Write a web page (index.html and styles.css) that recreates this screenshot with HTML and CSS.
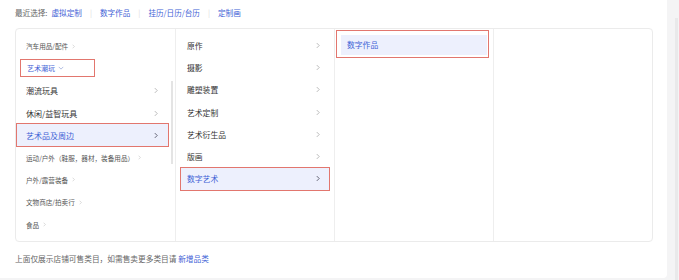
FILE: index.html
```html
<!DOCTYPE html>
<html lang="zh-CN">
<head>
  <meta charset="UTF-8">
  <title>选择类目</title>
  <link rel="stylesheet" href="styles.css">
</head>
<body>
  <div class="page">
    <div class="recent">
      <span class="label">最近选择:</span>
      <a href="#">虚拟定制</a><span class="sep">|</span>
      <a href="#">数字作品</a><span class="sep">|</span>
      <a href="#">挂历/日历/台历</a><span class="sep">|</span>
      <a href="#">定制画</a>
    </div>

    <div class="cascader">
      <div class="col col-first">
        <div class="row small">汽车用品/配件
          <svg class="arrow" viewBox="0 0 5 8"><polyline points="1,1 4,4 1,7"/></svg>
        </div>
        <div class="row group-row">
          <span class="group">艺术潮玩
            <svg class="down" viewBox="0 0 8 5"><polyline points="1,1 4,4 7,1"/></svg>
          </span>
        </div>
        <div class="row big">潮流玩具
          <svg class="arrow" viewBox="0 0 5 8"><polyline points="1,1 4,4 1,7"/></svg>
        </div>
        <div class="row big">休闲/益智玩具
          <svg class="arrow" viewBox="0 0 5 8"><polyline points="1,1 4,4 1,7"/></svg>
        </div>
        <div class="row big active">艺术品及周边
          <svg class="arrow" viewBox="0 0 5 8"><polyline points="1,1 4,4 1,7"/></svg>
        </div>
        <div class="row small">运动/户外（鞋服，器材，装备用品）
          <svg class="arrow" viewBox="0 0 5 8"><polyline points="1,1 4,4 1,7"/></svg>
        </div>
        <div class="row small">户外/露营装备
          <svg class="arrow" viewBox="0 0 5 8"><polyline points="1,1 4,4 1,7"/></svg>
        </div>
        <div class="row small">文物商店/拍卖行
          <svg class="arrow" viewBox="0 0 5 8"><polyline points="1,1 4,4 1,7"/></svg>
        </div>
        <div class="row small">食品
          <svg class="arrow" viewBox="0 0 5 8"><polyline points="1,1 4,4 1,7"/></svg>
        </div>
        <div class="track"></div>
      </div>

      <div class="col col-second">
        <div class="row">原作<svg class="arrow" viewBox="0 0 5 8"><polyline points="1,1 4,4 1,7"/></svg></div>
        <div class="row">摄影<svg class="arrow" viewBox="0 0 5 8"><polyline points="1,1 4,4 1,7"/></svg></div>
        <div class="row">雕塑装置<svg class="arrow" viewBox="0 0 5 8"><polyline points="1,1 4,4 1,7"/></svg></div>
        <div class="row">艺术定制<svg class="arrow" viewBox="0 0 5 8"><polyline points="1,1 4,4 1,7"/></svg></div>
        <div class="row">艺术衍生品<svg class="arrow" viewBox="0 0 5 8"><polyline points="1,1 4,4 1,7"/></svg></div>
        <div class="row">版画<svg class="arrow" viewBox="0 0 5 8"><polyline points="1,1 4,4 1,7"/></svg></div>
        <div class="row active">数字艺术<svg class="arrow" viewBox="0 0 5 8"><polyline points="1,1 4,4 1,7"/></svg></div>
      </div>

      <div class="col col-third">
        <div class="mark">
          <div class="leaf">数字作品</div>
        </div>
      </div>

      <div class="col"></div>
    </div>

    <p class="note">上面仅展示店铺可售类目，如需售卖更多类目请 <a href="#">新增品类</a></p>
  </div>
  <div class="gutter"><div class="thumb"></div></div>
</body>
</html>
```

FILE: styles.css
```css
body {
  margin: 0;
  background: #f4f4f5;
  font-family: "Noto Sans CJK SC", "Noto Sans", sans-serif;
  display: flex;
  height: 280px;
  overflow: hidden;
}

.page {
  width: 667px;
  height: 278px;
  background: #ffffff;
  border-radius: 0 0 4px 0;
  padding: 0 14px 0 15px;
  box-sizing: border-box;
}

.gutter {
  flex: 1;
  padding: 18px 0 0 8px;
}

.thumb {
  width: 3px;
  height: 262px;
  background: #e9e9ea;
}

a {
  color: #3f62d6;
  text-decoration: none;
}

.recent {
  margin-top: 6px;
  height: 14px;
  line-height: 14px;
  font-size: 7.6px;
  display: flex;
  align-items: center;
}

.recent .label {
  color: #666;
  margin-right: 4px;
}

.recent .sep {
  color: #dcdcdc;
  margin: 0 8px;
}

.cascader {
  margin-top: 8px;
  height: 214px;
  border: 1px solid #ebebeb;
  border-radius: 4px;
  display: grid;
  grid-template-columns: repeat(4, 1fr);
  box-sizing: border-box;
}

.col {
  border-left: 1px solid #eeeeee;
  position: relative;
}

.col:first-child {
  border-left: none;
}

.row {
  height: 22.3px;
  display: flex;
  align-items: center;
  justify-content: space-between;
  color: #333;
}

.arrow {
  width: 4px;
  height: 7px;
  fill: none;
  stroke: #aaa;
  stroke-width: 1;
}

.active {
  background: #edf0fd;
  color: #3f62d6;
  outline: 1px solid #e2766e;
}

.active .arrow {
  stroke: #445;
}

/* first column */
.col-first {
  padding: 6px 7px 0 1px;
}

.col-first .row {
  padding: 0 10px 0 9px;
}

.col-first .small {
  justify-content: flex-start;
  font-size: 6.6px;
  color: #555;
}

.col-first .small .arrow {
  width: 3px;
  height: 5px;
  margin-left: 4px;
  stroke: #c4c4c4;
}

.col-first .big {
  font-size: 8px;
}

.group-row {
  justify-content: flex-start;
}

.group {
  width: 75px;
  height: 18px;
  margin-left: -6px;
  padding-left: 6px;
  box-sizing: border-box;
  border: 1px solid #e2766e;
  display: flex;
  align-items: center;
  font-size: 7px;
  color: #3f62d6;
}

.down {
  width: 6px;
  height: 4px;
  margin-left: 3px;
  fill: none;
  stroke: #9aa8d8;
  stroke-width: 1;
}

.track {
  position: absolute;
  right: 2px;
  top: 52px;
  width: 2px;
  height: 83px;
  background: #e4e4e4;
}

/* second column */
.col-second {
  padding: 5px 5px 0;
}

.col-second .row {
  padding: 0 9px 0 6px;
  font-size: 7.8px;
}

/* third column */
.col-third {
  padding: 1px 4px 0 1px;
}

.mark {
  border: 1px solid #e2766e;
  padding: 4px 1px 2px 4px;
}

.leaf {
  height: 20px;
  line-height: 20px;
  padding-left: 6px;
  background: #edf0fd;
  color: #3f62d6;
  font-size: 7.8px;
}

.note {
  margin: 10px 0 0;
  line-height: 14px;
  font-size: 7.7px;
  color: #666;
}
```
